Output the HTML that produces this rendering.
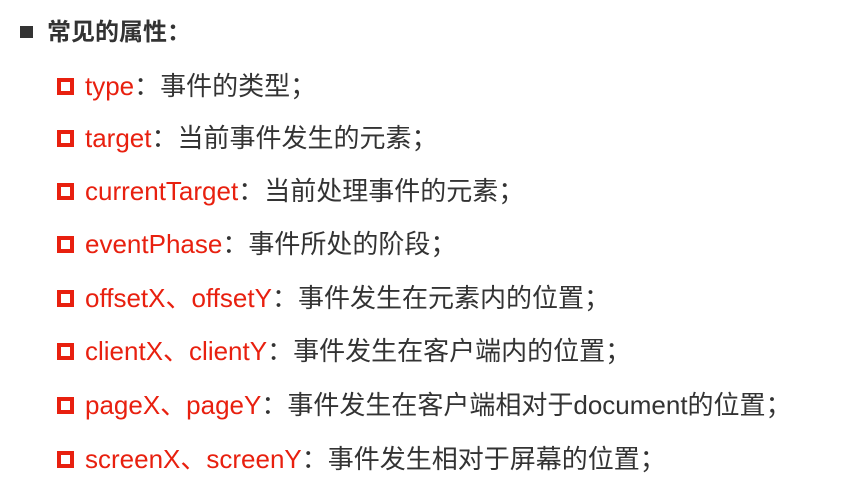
<!DOCTYPE html>
<html><head><meta charset="utf-8"><style>
body{margin:0;width:847px;height:500px;background:#fff;overflow:hidden;font-family:"Liberation Sans","Noto Sans CJK SC",sans-serif;}
.h{position:absolute;left:20px;top:17px;font-size:24px;font-weight:bold;color:#333;line-height:32px;}
.h i{display:inline-block;width:13px;height:12px;background:#333;margin-right:14px;vertical-align:2px;}
.r{position:absolute;left:57px;font-size:26px;line-height:32px;color:#333;white-space:nowrap;}
.r b{display:inline-block;box-sizing:border-box;width:17px;height:17px;border:4px solid #e8200f;margin-right:11px;vertical-align:0px;}
.r span{color:#e8200f;}
</style></head><body>
<div class="h"><i></i>常见的属性：</div>
<div class="r" style="top:70px"><b></b><span>type</span>：事件的类型；</div>
<div class="r" style="top:122px"><b></b><span>target</span>：当前事件发生的元素；</div>
<div class="r" style="top:175px"><b></b><span>currentTarget</span>：当前处理事件的元素；</div>
<div class="r" style="top:228px"><b></b><span>eventPhase</span>：事件所处的阶段；</div>
<div class="r" style="top:282px"><b></b><span>offsetX、offsetY</span>：事件发生在元素内的位置；</div>
<div class="r" style="top:335px"><b></b><span>clientX、clientY</span>：事件发生在客户端内的位置；</div>
<div class="r" style="top:389px"><b></b><span>pageX、pageY</span>：事件发生在客户端相对于document的位置；</div>
<div class="r" style="top:443px"><b></b><span>screenX、screenY</span>：事件发生相对于屏幕的位置；</div>
</body></html>
